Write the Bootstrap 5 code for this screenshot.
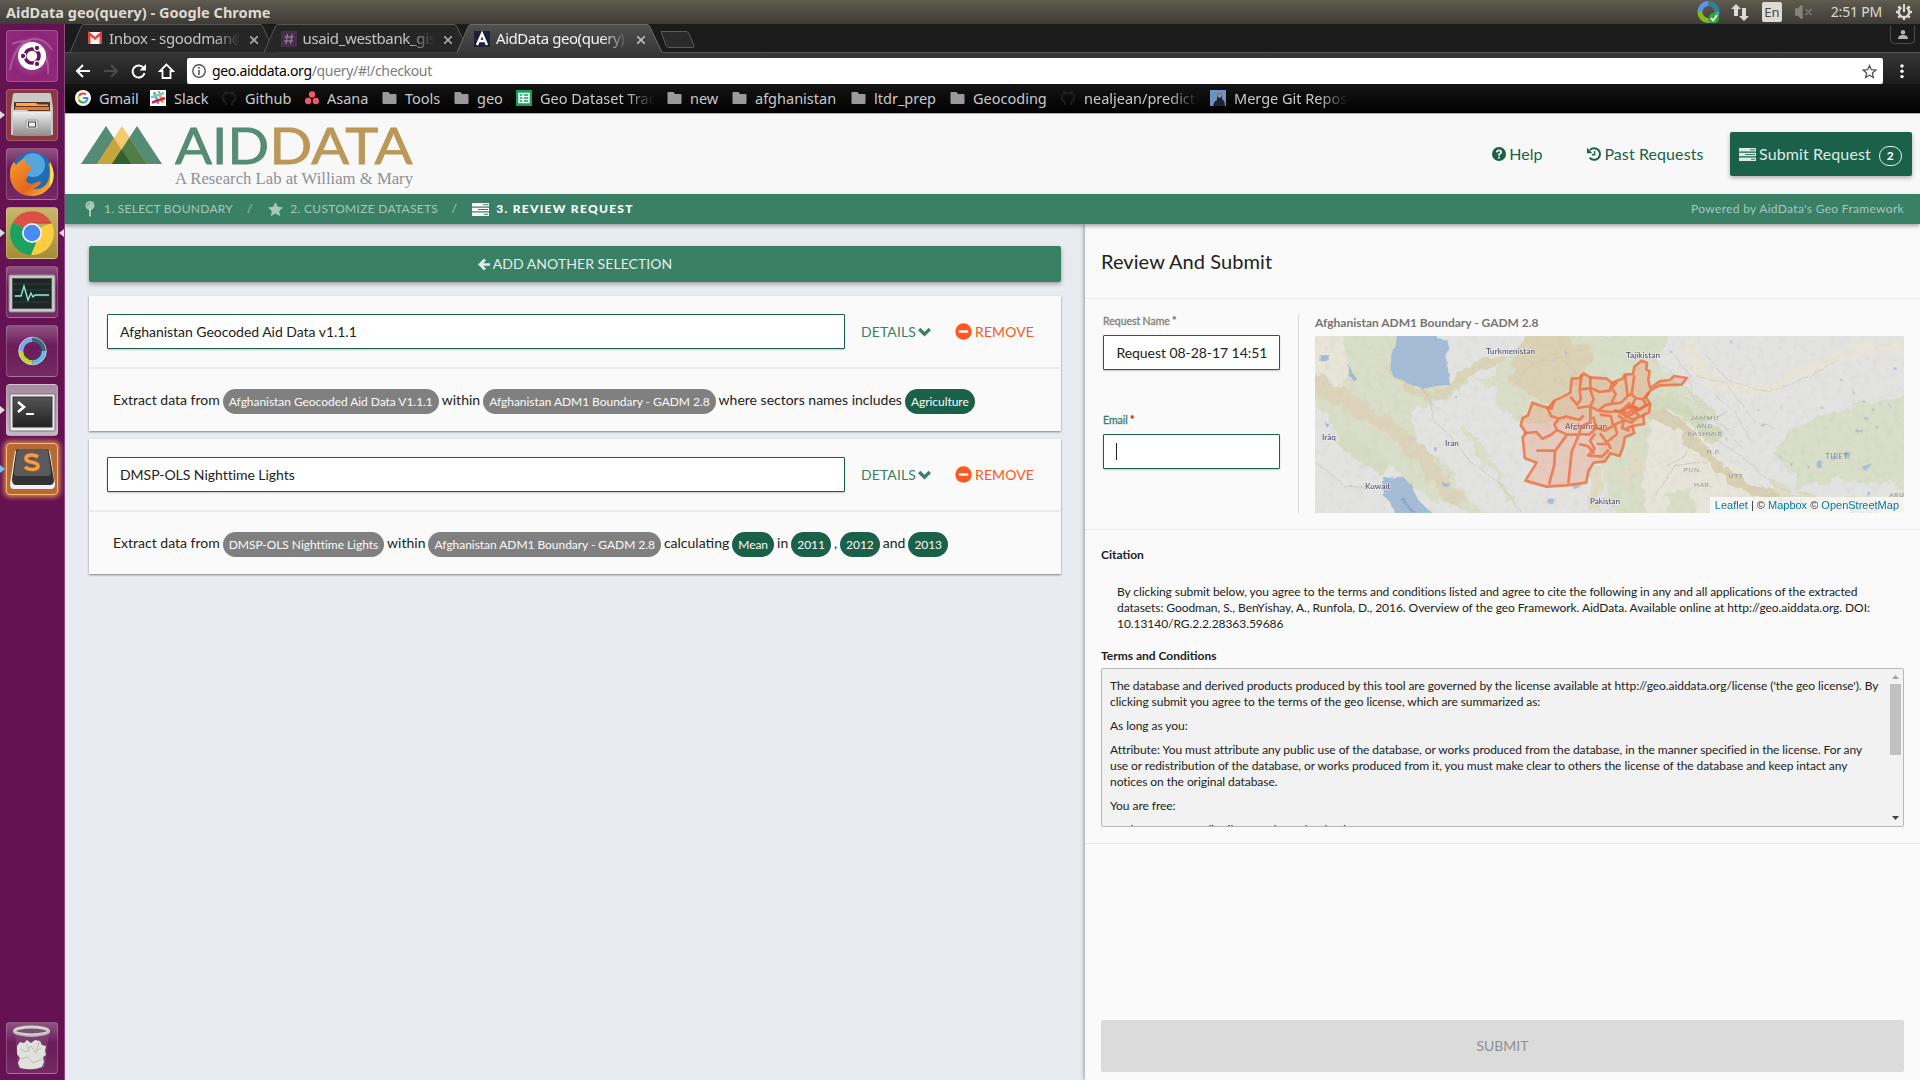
<!DOCTYPE html>
<html lang="en">
<head>
<meta charset="utf-8">
<title>AidData geo(query)</title>
<link href="https://cdn.jsdelivr.net/npm/bootstrap@5.3.0/dist/css/bootstrap.min.css" rel="stylesheet">
<style>
html,body{height:100%}
body{font-family:Lato,sans-serif;font-size:14px;color:#222;background:#e8ecf1;overflow:hidden;line-height:1.43}
svg{display:block;flex:none}
.desk{width:1920px;height:1080px}
.sysfont{font-family:"Noto Sans","Open Sans",sans-serif}
/* system panel */
.panel{height:24px;background:linear-gradient(#625d50,#5a564c 15%,#3d3c37);color:#dfdbd2;flex:none}
.panel .wtitle{padding-left:6px;font-weight:700;font-size:14.5px;letter-spacing:.02px}
.clock{margin:0 13px 0 18px;letter-spacing:-.2px;font-size:14px}
.lang{width:20px;height:20px;border-radius:2px;background:#dfdbd2;color:#4a4843;font-size:13px;line-height:20px;text-align:center}
/* launcher */
.launcher{width:65px;background:#651253;border-right:1px solid #8a4a7c;padding:6px 0 6px 6px;flex:none}
.apps{gap:7px}
.tile{width:52px;height:52px;border-radius:4px;border:1px solid rgba(255,255,255,.2);background:linear-gradient(rgba(255,255,255,.28),rgba(255,255,255,.04) 40%,rgba(255,255,255,.1));position:relative}
.tile>svg{position:absolute;left:-1px;top:-1px}
.tile.pip::before{content:"";position:absolute;left:-7px;top:21px;border:4px solid transparent;border-left:5px solid #ddd;border-right:0}
.tile.pipr::after{content:"";position:absolute;right:-7px;top:21px;border:4px solid transparent;border-right:5px solid #ddd;border-left:0}
.t-dash{background:radial-gradient(circle,#b05c9e,#8c2577 60%,#932a7e)}
.t-files{background:#8c3743}.t-chrome{background:linear-gradient(#c8b76b,#a58d35)}
.t-term{background:linear-gradient(#a68ba1,#c4b5c4)}
.t-subl{background:#b86a33;box-shadow:0 0 5px 2px #d98b4b;border-color:#ffb870}
.t-subl.pip::before{border-left-color:#6fc4e8}
/* browser chrome */
.strip{height:28px;background:#1b1b1b;padding-left:5px;flex:none}
.ctab{width:205px;height:29px;margin-right:-11.5px;position:relative;color:#c4c4c4;font-size:15px;padding:4px 17px 0 17px;flex:none}
.ctab>svg.shape{position:absolute;left:0;top:0}
.ctab>*:not(.shape){position:relative}
.ctab .ttl{width:132px;white-space:nowrap;overflow:hidden;letter-spacing:-.35px;margin-left:7px;line-height:21px;-webkit-mask-image:linear-gradient(90deg,#000 80%,transparent)}
.ctab.on{z-index:2;color:#f4f4f4}
.ctab.t3 .ttl{letter-spacing:-.45px;margin-left:6px}
.strip .userbox{width:25px;height:18px;border:1px solid #4c4c4c;border-top:0;border-radius:0 0 5px 5px;margin:2px 5px 0 0}
.tools{height:32px;background:linear-gradient(#363636,#1c1c1c);border-top:1px solid #545454;padding:5px 0 0 10px;flex:none}
.omni{width:1696px;height:26px;background:#fff;border-radius:2px;color:#7d7d7d;font-size:14px;padding:0 6px 0 5px;margin-left:12px}
.omni .addr{letter-spacing:-.33px;margin-left:6px}
.marks{height:30px;background:linear-gradient(#151515,#000);border-bottom:1px solid #b5b0b3;color:#c9c9c9;font-size:14.5px;padding:0 0 2px 10px;flex:none}
.bm{gap:8px;margin-right:12px;white-space:nowrap}
.bm span{overflow:hidden;display:block;line-height:24px}
.fade-r span{-webkit-mask-image:linear-gradient(90deg,#000 75%,transparent)}
/* page header */
.hd{height:80px;background:#f8f8f8;padding:0 8px 0 16px;flex:none}
.hlink{font-size:16px;color:#1b6049;gap:3.5px;text-decoration:none;line-height:24px}
.subreq{background:#1b6049;color:#dcebe5;height:44px;width:182px;border-radius:2px;padding-left:9px;font-size:16px;box-shadow:0 2px 4px rgba(0,0,0,.3);gap:3px;letter-spacing:.12px}
.cnt{width:23px;height:20px;border:1px solid #e8f2ee;border-radius:10px;font-size:12px;font-weight:700;line-height:18px;text-align:center;margin:3px 0 0 5px;color:#fff}
.steps{height:30px;background:#3a8067;color:rgba(255,255,255,.56);font-size:12px;letter-spacing:.28px;padding:0 16px 0 20px;box-shadow:0 2px 4px rgba(0,0,0,.35);position:relative;z-index:3;flex:none}
.steps .cur{color:#fff;font-weight:900;letter-spacing:1.28px}
.powered{letter-spacing:.32px}
/* left pane */
.lpane{width:1020px;padding:22px 24px 0 24px;background:#e8ecf1;flex:none}
.addbtn{height:36px;background:#3a8067;color:#e1eee9;border-radius:2px;box-shadow:0 2px 4px rgba(0,0,0,.35);margin-bottom:14px;gap:3px;width:972px;letter-spacing:.06px}
.sel{width:972px;height:135px;background:#fafafa;box-shadow:0 1px 2px rgba(0,0,0,.45);margin-bottom:8px}
.sel .top{height:73px;padding:0 27px 0 18px;border-bottom:2px solid #ececec}
.inp{height:35px;background:#fff;border:1px solid #1b6049;border-radius:1px;box-shadow:0 1px 2px rgba(0,0,0,.2);padding:1px 0 0 12px}
.inp.w1{width:738px;letter-spacing:-.03px}
.inp.w2{width:177px;padding-left:12.5px;margin-top:7px;letter-spacing:-.06px}
.act{color:#3a8067;gap:2px;padding-top:1px;letter-spacing:.1px}.act.rm{color:#ff5722;gap:3px}
.desc{height:62px;padding:0 0 0 24px;white-space:nowrap;line-height:25px}
.desc>span{margin-right:3px;margin-top:-1px}
.desc>.pill{background:#808080;color:#fafafa;height:25px;border-radius:12.5px;font-size:12px;line-height:26px;padding:0 6px;margin-top:3px;letter-spacing:-.045px}
.desc>.pill.g{background:#1b6049}
/* right pane */
.rpane{background:#fafafa;box-shadow:-1px 0 4px rgba(0,0,0,.35);padding:0;min-width:0}
.sec{border-bottom:1px solid #ececec}
.sec.hdr{height:75px;padding-left:16px;font-size:20px;letter-spacing:.07px}
.lab{font-size:10.5px;color:#808080;line-height:14px;-webkit-text-stroke:.3px;word-spacing:-.5px}
.formcol{width:196px;height:199px;margin:15px 0 0 18px;border-right:1px solid #d8d8d8}
.caret{width:1px;height:17px;background:#222;margin-bottom:1px}
.maptitle{font-size:12px;font-weight:700;color:#757575;line-height:16px;letter-spacing:-.02px}
.mapbox{width:589px;height:177px;overflow:hidden;position:relative;margin-top:5px}
.attr{position:absolute;right:0;bottom:0;height:16px;background:rgba(255,255,255,.7);font:11px/16px "Liberation Sans",sans-serif;color:#333;padding:0 5px;white-space:nowrap}
.attr b{font-weight:400;color:#0078a8}
.sm{font-size:12px;line-height:16px;letter-spacing:-.06px}
.sm .fw-bold{letter-spacing:0}
.terms{width:803px;height:159px;background:#f2f2f2;border:1px solid #b8b8b8;border-radius:2px;overflow:hidden}
.terms p{margin:0 0 8px}
.sbar{width:11px;margin-right:2px}
.thumbx{height:71px;background:#c1c1c1}
.subm{height:52px;background:#dbdbdb;color:#8f8f8f;border-radius:2px;margin:0 16px 8px}
</style>
</head>
<body>
<svg width="0" height="0" class="position-absolute"><defs>
<symbol id="i-fold" viewBox="0 0 14 13"><path d="M1 1h5l1.500 2H13q1 0 1 1v8q0 1-1 1H1q-1 0-1-1V1.500Q0 1 1 1z" fill="#9a9a9a"/></symbol>
<symbol id="i-git" viewBox="0 0 16 16"><path d="M5 15v-3M11 15v-3M5 12c-4-1-5-8 0-8l-1-2 3 1h2l3-1-1 2c5 0 4 7 0 8" fill="none" stroke="#222" stroke-width="1.600"/></symbol>
<symbol id="i-task" viewBox="0 0 17 13"><path d="M0 0h17v3.500H0zM0 4.700h17v3.600H0zM0 9.500h17V13H0z" fill="currentColor"/><path d="M11 1.800h5M6 6.500h10M12 11.300h4" stroke="#3a8067" stroke-width="1.100"/></symbol>
<symbol id="i-chev" viewBox="0 0 13 10"><path d="M1.200 2L6.500 7.200 11.800 2" fill="none" stroke="currentColor" stroke-width="3.200"/></symbol>
<symbol id="i-minus" viewBox="0 0 17 17"><circle cx="8.500" cy="8.500" r="8.200" fill="currentColor"/><path d="M3.800 8.500h9.400" stroke="#fff" stroke-width="2.400"/></symbol>
<linearGradient id="gm" x2="0" y2="1"><stop stop-color="#eee"/><stop offset="1" stop-color="#8d8d8d"/></linearGradient>
<linearGradient id="gd" x2="0" y2="1"><stop stop-color="#555"/><stop offset="1" stop-color="#222"/></linearGradient>
<linearGradient id="ga" x2="0" y2="1"><stop stop-color="#505050"/><stop offset="1" stop-color="#373737"/></linearGradient>
<linearGradient id="gf" x1="0" y1="0" x2="1" y2="1"><stop stop-color="#f4a12c"/><stop offset=".6" stop-color="#e8641e"/><stop offset="1" stop-color="#ffd43a"/></linearGradient>
</defs></svg>

<div class="desk d-flex flex-column">
 <div class="panel sysfont d-flex align-items-center">
  <div class="wtitle flex-grow-1">AidData geo(query) - Google Chrome</div>
  <svg width="23" height="22" viewBox="0 0 23 22" style="margin-right:11px"><g fill="none" stroke-width="5"><path d="M3 11A8.500 8.500 0 0 1 11.500 2.500" stroke="#5a93f2"/><path d="M11.500 2.500A8.500 8.500 0 0 1 20 11" stroke="#2e8390"/><path d="M20 11a8.500 8.500 0 0 1-8.500 8.500" stroke="#4aa0d0"/><path d="M11.500 19.500A8.500 8.500 0 0 1 3 11" stroke="#86b81a"/></g><circle cx="17" cy="17" r="5.200" fill="#2fa52d"/><path d="M14 17l2.200 2.500L20 14" fill="none" stroke="#fff" stroke-width="1.800"/></svg>
  <svg width="18" height="17" viewBox="0 0 18 17" style="margin-right:9px"><path d="M5 0l5 5H7v7H3V5H0zM13 17l-5-5h3V4h4v8h3z" fill="#dfdbd2"/></svg>
  <div class="lang ms-1">En</div>
  <svg width="18" height="14" viewBox="0 0 18 14" style="margin-left:13px"><path d="M0 4h3l4-4v14l-4-4H0zM10.500 4l6 6m0-6l-6 6" fill="#85827a" stroke="#85827a" stroke-width="1.300"/></svg>
  <div class="clock">2:51 PM</div>
  <svg width="18" height="18" viewBox="-9 -9 18 18" style="margin-right:7px"><g stroke="#dfdbd2" fill="none"><path d="M-2.600-4.500A5.200 5.200 0 1 0 2.600-4.500" stroke-width="2.200"/><path d="M0-8v8" stroke-width="2"/><path d="M-8 0h3M8 0H5M0 8V5M-5.700-5.700l2 2M5.700-5.700l-2 2M-5.700 5.700l2-2M5.700 5.700l-2-2" stroke-width="2.400"/></g></svg>
 </div>

 <div class="d-flex flex-grow-1" style="min-height:0">
  <div class="launcher d-flex flex-column" >
   <div class="apps d-flex flex-column flex-grow-1">
    <div class="tile t-dash"><svg width="52" height="52" viewBox="0 0 52 52"><path d="M4 40C10 4 36 2 46 20M6 14c20-10 38 8 36 30" fill="none" stroke="#c886bb" stroke-width="2" opacity=".5"/><circle cx="26" cy="26" r="14" fill="#fff"/><circle cx="26" cy="26" r="7" fill="none" stroke="#6d1459" stroke-width="3.600"/><g fill="#6d1459" stroke="#fff" stroke-width="1.300"><circle cx="17" cy="26" r="2.800"/><circle cx="31" cy="18" r="2.800"/><circle cx="31" cy="34" r="2.800"/></g></svg></div>
    <div class="tile t-files pip"><svg width="52" height="52" viewBox="0 0 52 52"><path d="M7 5q1-1 2-1h34q2 0 2 1l2 14v27H5V19z" fill="#c9c9c9"/><path d="M8 13h36v9H8z" fill="#5c3220"/><path d="M10 14h20l2 1.500h10V17H10z" fill="#f7a655"/><path d="M9 18h34v3H9z" fill="#e67f35"/><path d="M7 21h14l3 2h21v4H7z" fill="#d5d5d5"/><path d="M7 23h38v23q0 1-1 1H8q-1 0-1-1z" fill="url(#gm)"/><rect x="20" y="31" width="12" height="9" rx="1.500" fill="#ddd" stroke="#999"/><rect x="22.500" y="33" width="7" height="5" fill="#eee" stroke="#444"/></svg></div>
    <div class="tile"><svg width="52" height="52" viewBox="0 0 52 52"><circle cx="26" cy="25" r="21" fill="#1e6db4"/><circle cx="27" cy="17" r="12" fill="#63b4e6" opacity=".8"/><path d="M44 14c5 9 5 19-1 26-5 6-11 8-17 8C11 48 4 37 4 27c0-6 1-10 4-13l2 3c2-3 5-5 9-7-1 3 0 5 2 7 3 1 5 1 5 3s-2 3-4 4c-1 4 1 5-2 7 0 5 6 6 11 3 2-1 4 0 4 1-3 3-5 4-8 6 8 1 15-3 16-12 1-4 1-8-1-12z" fill="url(#gf)"/><path d="M44 14c5 9 5 19-1 26 2-9 1-18 1-26z" fill="#ffe45a"/></svg></div>
    <div class="tile t-chrome pip pipr"><svg width="52" height="52" viewBox="0 0 52 52"><path d="M26 26L7 15A22 22 0 0 1 45.500 16H26z" fill="#dd5144"/><path d="M26 26L36 20l9.500-4A22 22 0 0 1 25 48z" fill="#ffcd42"/><path d="M26 26l4 10-5 12A22 22 0 0 1 7 15z" fill="#1aa260"/><path d="M26 16h19.500" stroke="#b83b30"/><circle cx="26" cy="26" r="10" fill="#f5f5f5"/><circle cx="26" cy="26" r="8.300" fill="#4a8af4"/></svg></div>
    <div class="tile"><svg width="52" height="52" viewBox="0 0 52 52"><rect x="3" y="9" width="46" height="37" rx="1.500" fill="#c9c9c9" stroke="#888"/><rect x="6.500" y="12.500" width="39" height="30" fill="#1d2826" stroke="#555"/><path d="M7 18h38M7 24h38M7 30h38M7 36h38" stroke="#303d3a"/><path d="M9 30h6l3-10 4 14 3-7 2 4 2-2h14" fill="none" stroke="#8ff0dc" stroke-width="1.300"/></svg></div>
    <div class="tile"><svg width="52" height="52" viewBox="0 0 52 52"><g fill="none" stroke-width="4.500"><path d="M15 26A11.500 11.500 0 0 1 26.500 14.500" stroke="#7ba6f0"/><path d="M26.500 14.500A11.500 11.500 0 0 1 38 26" stroke="#2b6d7e"/><path d="M38 26A11.500 11.500 0 0 1 26.500 37.500" stroke="#5bc0de"/><path d="M26.500 37.500A11.500 11.500 0 0 1 15 26" stroke="#b3d92c"/></g><circle cx="26.500" cy="26" r="13.800" fill="none" stroke="#ddd" stroke-width=".8"/></svg></div>
    <div class="tile t-term pip"><svg width="52" height="52" viewBox="0 0 52 52"><rect x="4" y="10" width="45" height="37" rx="1" fill="#eee" stroke="#777"/><rect x="7" y="13" width="39" height="30" fill="url(#gd)" stroke="#333"/><path d="M12 18l6 5-6 5" fill="none" stroke="#fff" stroke-width="2.600"/><path d="M20 30h8" stroke="#fff" stroke-width="2"/></svg></div>
    <div class="tile t-subl pip"><svg width="52" height="52" viewBox="0 0 52 52"><path d="M9 8l-5 33q0 5 4 5h37q4 0 4-5L44 8z" fill="#f0f0f0"/><path d="M10 8L6 36q0 6 4 6h34q4 0 4-5L43 8q-1-2-3-2H13q-3 0-3 2z" fill="#333"/><path d="M11 8l-3 22q0 3 3 3h31q3 0 3-3L42 8q-1-2-3-2H13z" fill="#5a5a5a"/><path d="M32 14c-4-3-12-2.500-12 1.500 0 5.500 12 2 12 7.500 0 4.500-9 4.500-13 1" fill="none" stroke="#ff9a3c" stroke-width="3.600"/></svg></div>
   </div>
   <div class="tile"><svg width="52" height="52" viewBox="0 0 52 52"><path d="M9 10l3 35q14 6 27 0l4-35z" fill="#8a5c83" opacity=".45"/><path d="M11 24l3-4 4 1 3-3 4 3 4-3 5 1 2 4 4 1-1 5 1 4-3 2 1 5-2 5q-10 4-22 1l-2-5 2-5-3-4z" fill="#e0e0dc"/><path d="M14 27l6 3 5-6 4 6 6-4M15 37l7-2 5 6 9-4M21 22l2 8M33 20l-3 12" stroke="#bdbdb8" fill="none"/><ellipse cx="25.500" cy="9" rx="17" ry="4" fill="#7d4f74" stroke="#d5d5d2" stroke-width="3"/><path d="M8.500 9v2q17 6 34 0V9" fill="none" stroke="#bbb" stroke-width="1.500"/></svg></div>
  </div>

  <div class="d-flex flex-column flex-grow-1" style="min-width:0">
   <div class="strip sysfont d-flex">
    <div class="ctab d-flex"><svg class="shape" width="205" height="29"><path d="M0 28.500L11 3Q12 .5 14 .5H190Q192 .5 193 3L205 28.500" fill="#262626" stroke="#565656"/></svg>
     <svg width="14" height="14" viewBox="0 0 14 12" style="margin:3px 0 0 1px"><path d="M0 0h14v12H0z" fill="#f2f2f2"/><path d="M1.200 12V1.500L7 6.500l5.800-5V12" fill="none" stroke="#e0443a" stroke-width="2.400"/></svg>
     <div class="ttl">Inbox - sgoodman@aid</div><svg width="8" height="8" class="ms-auto mt-2" viewBox="0 0 8 8"><path d="M0 0l8 8m0-8L0 8" stroke="#aaa" stroke-width="1.600"/></svg></div>
    <div class="ctab d-flex"><svg class="shape" width="205" height="29"><path d="M0 28.500L11 3Q12 .5 14 .5H190Q192 .5 193 3L205 28.500" fill="#262626" stroke="#565656"/></svg>
     <svg width="16" height="16" viewBox="0 0 16 16" style="margin-top:3px"><path d="M0 0h16v16H0z" fill="#45304a"/><path d="M6.500 3l-1.500 10M11 3L9.500 13M3.500 6h9M3 10h9" stroke="#a68aa8"/></svg>
     <div class="ttl" style="margin-left:6px">usaid_westbank_gis</div><svg width="8" height="8" class="ms-auto mt-2" viewBox="0 0 8 8"><path d="M0 0l8 8m0-8L0 8" stroke="#aaa" stroke-width="1.600"/></svg></div>
    <div class="ctab d-flex on t3"><svg class="shape" width="205" height="29"><path d="M0 28.500L11 3Q12 .5 14 .5H190Q192 .5 193 3L205 28.500V29H0z" fill="url(#ga)"/><path d="M0 28.500L11 3Q12 .5 14 .5H190Q192 .5 193 3L205 28.500" fill="none" stroke="#6a6a6a"/></svg>
     <svg width="16" height="16" viewBox="0 0 16 16" style="margin-top:3px"><path d="M0 0h16v16H0z" fill="#1b2138"/><path d="M3 14L8 2.500 13 14M5 10h6" fill="none" stroke="#fff" stroke-width="2.400"/></svg>
     <div class="ttl">AidData geo(query)</div><svg width="8" height="8" class="ms-auto mt-2" viewBox="0 0 8 8"><path d="M0 0l8 8m0-8L0 8" stroke="#bbb" stroke-width="1.600"/></svg></div>
    <svg width="36" height="20" viewBox="0 0 36 20" style="margin:6px 0 0 9px"><path d="M1 1.500h25q2 0 3 2l5 12q1 2-2 2H9q-2 0-3-2z" fill="#2b2b2b" stroke="#5a5a5a"/></svg>
    <div class="userbox ms-auto d-flex justify-content-center"><svg width="10" height="9" viewBox="0 0 10 9" class="mt-1"><circle cx="5" cy="2.200" r="2.200" fill="#b5b5b5"/><path d="M0 9q0-4 5-4t5 4z" fill="#b5b5b5"/></svg></div>
   </div>
   <div class="tools sysfont d-flex align-items-center">
    <svg width="16" height="14" viewBox="0 0 16 14"><path d="M15 7H2M8 1L2 7l6 6" fill="none" stroke="#fff" stroke-width="2"/></svg>
    <svg width="16" height="14" viewBox="0 0 16 14" style="margin-left:12px"><path d="M1 7h13M8 1l6 6-6 6" fill="none" stroke="#4c4c4c" stroke-width="2"/></svg>
    <svg width="15" height="15" viewBox="0 0 15 15" style="margin-left:12px"><path d="M12.500 4A6 6 0 1 0 13.500 9" fill="none" stroke="#fff" stroke-width="2"/><path d="M15 0v6.500H8.500z" fill="#fff"/></svg>
    <svg width="17" height="16" viewBox="0 0 17 16" style="margin-left:12px"><path d="M8.500 1.500L2 8h2.500v7h8V8H15z" fill="none" stroke="#fff" stroke-width="1.800"/></svg>
    <div class="omni d-flex align-items-center"><svg width="14" height="14" viewBox="0 0 14 14"><circle cx="7" cy="7" r="6.200" fill="none" stroke="#555" stroke-width="1.400"/><path d="M7 6v5M7 3v1.700" stroke="#555" stroke-width="1.600"/></svg><div class="addr"><span class="text-black">geo.aiddata.org</span>/query/#!/checkout</div>
     <svg class="ms-auto" width="15" height="15" viewBox="0 0 15 15"><path d="M7.500 1.500l1.800 4.200 4.500.4-3.400 3 1 4.400-3.900-2.300-3.900 2.300 1-4.400-3.400-3 4.500-.4z" fill="none" stroke="#555" stroke-width="1.300"/></svg></div>
    <svg width="4" height="15" viewBox="0 0 4 15" style="margin-left:17px"><g fill="#fff"><circle cx="2" cy="2" r="1.700"/><circle cx="2" cy="7.300" r="1.700"/><circle cx="2" cy="12.600" r="1.700"/></g></svg>
   </div>
   <div class="marks sysfont d-flex align-items-center">
    <div class="bm d-flex align-items-center"><svg width="16" height="16" viewBox="0 0 16 16"><circle cx="8" cy="8" r="8" fill="#fff"/><g fill="none" stroke-width="2"><path d="M11 4.500A4.500 4.500 0 0 0 4 6" stroke="#ea4335"/><path d="M4 6a4.500 4.500 0 0 0 0 4" stroke="#fbbc05"/><path d="M4 10a4.500 4.500 0 0 0 7 1.500" stroke="#34a853"/><path d="M11 11.500A4.500 4.500 0 0 0 12.500 8H8" stroke="#4285f4"/></g></svg><span style="width:39px">Gmail</span></div>
    <div class="bm d-flex align-items-center"><svg width="16" height="16" viewBox="0 0 16 16"><path d="M0 0h16v16H0z" fill="#fff"/><g stroke-width="2.400"><path d="M4 2l4.500 12" stroke="#3eb991"/><path d="M8.500 1L13 13" stroke="#e9a820"/><path d="M1 7.500L14 3" stroke="#6ecadc"/><path d="M2 12.500L15 8" stroke="#e01765"/></g></svg><span style="width:35px">Slack</span></div>
    <div class="bm d-flex align-items-center"><svg width="16" height="16"><use href="#i-git"/></svg><span style="width:48px">Github</span></div>
    <div class="bm d-flex align-items-center"><svg width="14" height="14" viewBox="0 0 14 14"><g fill="#f0596a"><circle cx="7" cy="3.500" r="3.200"/><circle cx="3.200" cy="10" r="3.200"/><circle cx="10.800" cy="10" r="3.200"/></g></svg><span style="width:43px">Asana</span></div>
    <div class="bm d-flex align-items-center"><svg width="15" height="13"><use href="#i-fold"/></svg><span style="width:37px">Tools</span></div>
    <div class="bm d-flex align-items-center"><svg width="15" height="13"><use href="#i-fold"/></svg><span style="width:27px">geo</span></div>
    <div class="bm d-flex align-items-center fade-r"><svg width="16" height="16" viewBox="0 0 16 16"><path d="M0 0h16v16H0z" fill="#12a05c"/><path d="M3 3.500h10v9H3zM3 6.500h10M3 9.500h10M7 3.500v9" fill="none" stroke="#fff" stroke-width="1.400"/></svg><span style="width:115px">Geo Dataset Track</span></div>
    <div class="bm d-flex align-items-center"><svg width="15" height="13"><use href="#i-fold"/></svg><span style="width:30px">new</span></div>
    <div class="bm d-flex align-items-center"><svg width="15" height="13"><use href="#i-fold"/></svg><span style="width:84px">afghanistan</span></div>
    <div class="bm d-flex align-items-center"><svg width="15" height="13"><use href="#i-fold"/></svg><span style="width:64px">ltdr_prep</span></div>
    <div class="bm d-flex align-items-center"><svg width="15" height="13"><use href="#i-fold"/></svg><span style="width:75px">Geocoding</span></div>
    <div class="bm d-flex align-items-center fade-r"><svg width="16" height="16"><use href="#i-git"/></svg><span style="width:114px">nealjean/predicti</span></div>
    <div class="bm d-flex align-items-center fade-r"><svg width="16" height="16" viewBox="0 0 16 16"><path d="M0 0h16v16H0z" fill="#6f90c4"/><path d="M3 16q1-5 4-6V5q2-4 5 0v4q3 2 3 7z" fill="#1d2234"/><circle cx="9.500" cy="5.500" r="2.200" fill="#a98b85"/></svg><span style="width:114px">Merge Git Reposit</span></div>
   </div>

   <div class="hd d-flex align-items-center">
    <svg width="336" height="80" viewBox="0 0 336 80"><path d="M0 50L25 12l25 38z" fill="#568b76"/><path d="M31 50L56 12l25 38z" fill="#568b76"/><path d="M16 50L41 12l25 38z" fill="#f3ca6d"/><path d="M16 50L33 24.300 50 50z" fill="#c5a63c"/><path d="M31 50L48.500 23.500 66 50z" fill="#527c48"/><path d="M31 50l9.500-14.500L50 50z" fill="#33602e"/>
     <g font-family="Lato,sans-serif" font-size="51" stroke-width=".8"><text x="94" y="49.500" textLength="94" lengthAdjust="spacingAndGlyphs" fill="#568b76" stroke="#568b76">AID</text><text x="188.500" y="49.500" textLength="143" lengthAdjust="spacingAndGlyphs" fill="#bb9859" stroke="#bb9859">DATA</text></g>
     <text x="94" y="69.500" font-family="Liberation Serif,serif" font-size="17.500" textLength="238" lengthAdjust="spacingAndGlyphs" fill="#8a9299">A Research Lab at William &amp; Mary</text></svg>
    <a class="hlink d-flex align-items-center ms-auto"><svg width="14" height="14" viewBox="0 0 14 14"><circle cx="7" cy="7" r="7" fill="#1b6049"/><path d="M4.800 5.300Q5 3.300 7 3.300t2.200 1.900Q9.200 6.300 7 7.400V8.700" fill="none" stroke="#f8f8f8" stroke-width="1.700"/><path d="M6.100 9.700h1.800v1.700H6.100z" fill="#f8f8f8"/></svg>Help</a>
    <a class="hlink d-flex align-items-center" style="margin:0 26.500px 0 44.500px;gap:3.500px;letter-spacing:.09px"><svg width="14" height="14" viewBox="0 0 14 14"><path d="M2.600 10.600A5.800 5.800 0 1 0 3 3" fill="none" stroke="#1b6049" stroke-width="2"/><path d="M0 .8v5.400h5.400z" fill="#1b6049"/><path d="M7.600 4v3.800H5" fill="none" stroke="#1b6049" stroke-width="1.400"/></svg>Past Requests</a>
    <div class="subreq d-flex align-items-center"><svg width="17" height="13"><use href="#i-task"/></svg>Submit Request<div class="cnt">2</div></div>
   </div>
   <div class="steps d-flex align-items-center">
    <svg width="10" height="16" viewBox="0 0 10 16"><circle cx="5" cy="4.500" r="4.500" fill="currentColor"/><path d="M4 8h2v7l-1 1-1-1z" fill="currentColor"/><path d="M2.500 4.500Q2.700 2.500 4.600 2.200" fill="none" stroke="#3a8067" stroke-width=".8"/></svg><span style="margin-left:9px">1. SELECT BOUNDARY</span><span style="margin:0 15.500px 0 14px">/</span>
    <svg width="15" height="14" viewBox="0 0 15 14"><path d="M7.500 0l2.300 4.700 5.200.7-3.800 3.600 1 5.100-4.700-2.500-4.700 2.500 1-5.100L0 5.400l5.200-.7z" fill="currentColor"/></svg><span style="margin-left:7px">2. CUSTOMIZE DATASETS</span><span style="margin:0 14.500px 0 13.500px">/</span>
    <span class="cur d-flex align-items-center"><svg width="17" height="13" style="margin-right:7.500px"><use href="#i-task"/></svg>3. REVIEW REQUEST</span>
    <span class="powered ms-auto">Powered by AidData's Geo Framework</span>
   </div>

   <div class="d-flex flex-grow-1" style="min-height:0">
    <div class="lpane">
     <div class="addbtn d-flex align-items-center justify-content-center"><svg width="12" height="13" viewBox="0 0 12 13"><path d="M12 6.500H2.500M7 1.500l-5 5 5 5" fill="none" stroke="currentColor" stroke-width="2.700"/></svg>ADD ANOTHER SELECTION</div>
     <div class="sel">
      <div class="top d-flex align-items-center"><div class="inp w1 d-flex align-items-center">Afghanistan Geocoded Aid Data v1.1.1</div>
       <div class="act d-flex align-items-center ms-3">DETAILS<svg width="13" height="10"><use href="#i-chev"/></svg></div><div class="act rm d-flex align-items-center ms-auto"><svg width="17" height="17"><use href="#i-minus"/></svg>REMOVE</div></div>
      <div class="desc d-flex align-items-center"><span>Extract data from</span><span class="pill">Afghanistan Geocoded Aid Data V1.1.1</span><span>within</span><span class="pill">Afghanistan ADM1 Boundary - GADM 2.8</span><span>where sectors names includes</span><span class="pill g">Agriculture</span></div>
     </div>
     <div class="sel">
      <div class="top d-flex align-items-center"><div class="inp w1 d-flex align-items-center">DMSP-OLS Nighttime Lights</div>
       <div class="act d-flex align-items-center ms-3">DETAILS<svg width="13" height="10"><use href="#i-chev"/></svg></div><div class="act rm d-flex align-items-center ms-auto"><svg width="17" height="17"><use href="#i-minus"/></svg>REMOVE</div></div>
      <div class="desc d-flex align-items-center"><span>Extract data from</span><span class="pill">DMSP-OLS Nighttime Lights</span><span>within</span><span class="pill">Afghanistan ADM1 Boundary - GADM 2.8</span><span>calculating</span><span class="pill g">Mean</span><span>in</span><span class="pill g">2011</span><span>,</span><span class="pill g">2012</span><span>and</span><span class="pill g">2013</span></div>
     </div>
    </div>

    <div class="rpane flex-grow-1 d-flex flex-column">
     <div class="sec hdr d-flex align-items-center">Review And Submit</div>
     <div class="sec d-flex" style="height:231px">
      <div class="formcol">
       <div class="lab">Request Name *</div>
       <div class="inp w2 d-flex align-items-center">Request 08-28-17 14:51</div>
       <div class="lab" style="margin-top:43px;color:#3a8067">Email <span style="color:#dd2c00">*</span></div>
       <div class="inp w2 d-flex align-items-center" style="padding-left:12px"><div class="caret"></div></div>
      </div>
      <div style="margin-left:16px;padding-top:16px">
       <div class="maptitle">Afghanistan ADM1 Boundary - GADM 2.8</div>
       <div class="mapbox">
        <svg width="589" height="177" viewBox="0 0 589 177">
         <defs><filter id="rough" x="-5%" y="-5%" width="110%" height="110%"><feTurbulence type="fractalNoise" baseFrequency=".07" numOctaves="4" seed="7"/><feDisplacementMap in="SourceGraphic" scale="15" xChannelSelector="R" yChannelSelector="G"/></filter>
         <filter id="jag" x="-5%" y="-5%" width="110%" height="110%"><feTurbulence type="fractalNoise" baseFrequency=".12" numOctaves="3" seed="3"/><feDisplacementMap in="SourceGraphic" scale="4" xChannelSelector="R" yChannelSelector="G"/></filter>
         <filter id="relief" x="0" y="0" width="100%" height="100%"><feTurbulence type="fractalNoise" baseFrequency=".14" numOctaves="4" seed="12"/><feColorMatrix values="0 0 0 0 .5  0 0 0 0 .47  0 0 0 0 .36  2.600 0 0 0 -1.250"/></filter></defs>
         <rect width="589" height="177" fill="#e3e3e2"/>
         <g filter="url(#rough)">
          <g transform="translate(-235 -106) scale(.3333)">
           <path d="M690 300h250l10 130 80 50 120-30 130 40 60-60 50-120h80v230l-120-40-90-60-100 20-90 60-80 20 30 110 80 60 60 90 70 50-30 20-80-50-100-30-110-110-110-30-80-110-50-90z" fill="#d9dec9"/>
           <path d="M690 300h100l20 130-50 60-70-20z" fill="#e7e4d8"/>
           <path d="M690 440l130 90 110 60 90 80 60 90 60 60" fill="none" stroke="#dcd3bb" stroke-width="46"/>
           <path d="M930 400l60 80 80 20 120-90 80-30 80 70" fill="none" stroke="#d9d3b8" stroke-width="24"/>
           <path d="M1150 590l70 90 70 130" fill="none" stroke="#d9dec9" stroke-width="18"/>
           <path d="M780 620l80 60 60 40" fill="none" stroke="#d6dcc3" stroke-width="50"/>
          </g>
          <g transform="translate(185 -36) scale(.3333)">
           <path d="M-10 190l100-60 120-50 110 30 80-30 100 20-30 80 60 60 60 60 60 40-80 100-90 170-60 60-80-10-60-300-200 20-90-60z" fill="#d9dec9"/>
           <path d="M20 240l60-140 80-10 120 60-30 110-130 50z" fill="#dbd1b5"/>
           <path d="M460 330l100 0 90 110 100 90 80 60 80 60H440l-10-140z" fill="#e7e4da"/>
           <path d="M450 330l90 50 80 90 100 80 120 50 100 10" fill="none" stroke="#d8d0b4" stroke-width="36"/>
           <path d="M430 320l80-20 80 60 60 60" fill="none" stroke="#d2dabd" stroke-width="46"/>
           <path d="M560 130l60 100 100 40 100-10 140-70 120-40 140-10" fill="none" stroke="#e7e5d9" stroke-width="36"/>
           <path d="M820 460l60-80 130-50 230-50v280l-220-20-120 20z" fill="#d8dec8"/>
           <path d="M800 530l100 50 120 20 220-20v80H860z" fill="#dedcc6"/>
           <path d="M510 580l60-20 20 40-20 60h-80z" fill="#d9dec9"/>
           <path d="M290 500l-10 140M400 440l20 60-60 40" fill="none" stroke="#dedac4" stroke-width="34"/>
          </g>
         </g>
         <rect width="589" height="177" filter="url(#relief)" opacity=".16"/>
         <g filter="url(#jag)" fill="none" stroke="#c9c6b8" stroke-width=".8"><path d="M76 18l18 14 20 30 6 24 14 12 20 26 30 22 22 30M80 36l26 14 14 22M0 126l30 24 22 2M200 42l20-16 26-4 20 20M244 40l12 20M352 130l18-10 12-32 30-12M340 160l20-30 24-4"/><path d="M350 70l26 8 20 22 30 20 36 32 40 8M366 60l30 14 32 40M392 20l20 24 40 12 30-10 40-20M380 40l30 6 30 40 20 6M360 20l14 18 4 24 18 10M350 30l20 20 20 30 30 16M400 60l20 16 16 30" stroke="#cfcdbf"/></g>
         <g fill="#a4bbd5" filter="url(#jag)">
          <g transform="translate(-235 -106) scale(.3333)"><path d="M952 300h112l8 28 30 4 6 26-10 12 12 94-40 4-40 8-32-10-30-16-22-6-14-22 2-48 12-20z"/><path d="M806 400l10 26 16 22-10 6-14-18zM720 376l32 0-10 16-24 4zM734 570l12 22-8 4zM910 745l60-5 25 30 20 40 50 50H946l-14-42-20-20zM1090 755l20 10-6 6-16-6zM1066 652l8 0-2 10-6 0zM1122 500l16 0-6 6z"/></g>
          <g transform="translate(185 -36) scale(.3333)"><path d="M215 555l30 0-20 14zM145 597l24-2-10 14-14 0zM190 148l14 12-6 2zM1018 240l8-6 2 8zM1054 272l12 6-8 4zM1180 200l12 6-10 4zM1070 392l20-2-4 8-16 2zM1085 500l30-10-20 22zM1035 455l20 4-10 16-14-10zM950 490l14-10 2 20-14 4zM918 492l14 8-8 4zM870 488l10 4-6 8zM836 470l8 2-4 6zM770 330l8-2 0 6zM725 320l8 0-2 8zM784 370l12 2-6 6zM960 322l10-2-2 8zM1090 350l16 6-10 4zM1085 298l14 4-6 6zM1100 576l12 0-6 14zM506 156l10-4 2 10zM688 126l8-2 0 8z"/><path d="M990 470l14 0-4 10zM1115 325l10 4-6 6zM1130 380l8 4-6 6zM1165 310l8 6-6 4zM840 320l6 0-2 8zM675 416l6-2 0 8z"/></g></g>
         <g font-family="Lato,sans-serif" font-size="8.200" fill="#45456b" stroke="#f0f0ee" stroke-width="1.500" paint-order="stroke" stroke-opacity=".6">
          <text x="171" y="18" textLength="49">Turkmenistan</text><text x="7" y="104">Irāq</text><text x="130" y="110">Iran</text><text x="50" y="153">Kuwait</text><text x="311" y="22" textLength="34">Tajikistan</text><text x="275" y="168">Pakistan</text><text x="250" y="93" textLength="42">Afghanistan</text></g>
         <g font-family="Lato,sans-serif" font-size="6.500" fill="#93939f" letter-spacing=".8" text-anchor="middle"><text x="390" y="84">JAMMU</text><text x="390" y="92">AND</text><text x="390" y="100">KASHMIR</text><text x="399" y="118">H.P.</text><text x="378" y="136">PUN.</text><text x="388" y="151">HAR.</text><text x="421" y="142">UTT</text><text x="522" y="123" fill="#7c8a9d" font-size="7">TIBET</text><text x="582" y="161">ARU</text><text x="475" y="167" font-size="8">Nepal</text><text x="549" y="177" font-size="7.500">Bhutan</text><text x="97" y="170" font-size="5.500" transform="rotate(48 92 168)" letter-spacing=".2" fill="#7088a8">Persian G</text></g>
         <g transform="translate(185 -36) scale(.3333)" stroke="#ee6a3c" stroke-opacity=".78" stroke-width="8" stroke-linejoin="round" fill="none">
          <path d="M97 308l34 12 24 6 8-24 26-12 22-12 4-42 24-2 12-14 20 12 50 4 14 12 32-12 8-12 24-2 4-22 22-18 16 6-2 20 10 6-4 26 6 24 28-20 30-4 14-12 38 6-16 20-66 2-28 16-14 18 14 22-4 26-18 8 4 26-36 6 6 22-28 12-6 30-10 26-28-8-16 24-34 4-16 26-6 34-60 8-60 4-63-18 34-54-36-14-6-62 10-14-16-22 6-22 16-8z" fill="#f4713f" fill-opacity=".22"/>
          <path d="M163 302l-20 24 10 22 24 8 22-6 40 10 12-14M177 356l-14 18 8 16-20 16-24 10-18-20-38 4M211 290l20 24 12-16-4-26 6-50M231 324l40-6 10-20-10-28 0-40M243 268l30-4 26 12 30-4 8-24M271 320l24 12 20-16 18-4 14-30-12-18 16-18M333 312l30-4 20-20-8-64M383 288l12-6 8-56M395 282l12 12-10 22-28 16-40 4-34-4M407 294l22 4 20-20M429 298l10 16-26 18-16-16M171 390l30 14 36 0 6-24 28-14 0-46M237 402l30 2 22-20-10-34M289 384l26 8 24-14-6-30-34-4M201 404l-36 50-2 40-16 60M109 452l54 0M237 402l-22 54-10 94M237 432l26 6 20 22M286 400l-16 22 14 24-20 20 42 4 20-20"/>
          <path d="M300 400l20 26 32-24M352 402l-8-28 30-14-20-14M374 360l20 8 24-20-18-18M380 384l20-6M342 330l30 14 24-12-8-18M372 344l24 14 38-12M383 320l30 12M396 316l24 12 30-18M360 330l20 24M290 432l36 0 6 16M388 310l14 30-22 10-12-22zM372 362l-6 22 22 8"/>
         </g>
        </svg>
        <div class="attr"><b>Leaflet</b> | © <b>Mapbox</b> © <b>OpenStreetMap</b></div>
       </div>
      </div>
     </div>
     <div class="sec sm" style="height:314px;padding:17px 16px 0 16px">
      <div class="fw-bold">Citation</div>
      <div class="text-nowrap" style="margin:21px 0 0 16px;height:48px"><span style="letter-spacing:-.08px">By clicking submit below, you agree to the terms and conditions listed and agree to cite the following in any and all applications of the extracted</span><br>datasets: Goodman, S., BenYishay, A., Runfola, D., 2016. Overview of the geo Framework. AidData. Available online at http://geo.aiddata.org. DOI:<br>10.13140/RG.2.2.28363.59686</div>
      <div class="fw-bold" style="margin:16px 0 4px">Terms and Conditions</div>
      <div class="terms d-flex justify-content-between">
       <div class="text-nowrap" style="padding:9px 0 0 8px">
        <p>The database and derived products produced by this tool are governed by the license available at http://geo.aiddata.org/license ('the geo license'). By<br>clicking submit you agree to the terms of the geo license, which are summarized as:</p>
        <p>As long as you:</p>
        <p>Attribute: You must attribute any public use of the database, or works produced from the database, in the manner specified in the license. For any<br>use or redistribution of the database, or works produced from it, you must make clear to others the license of the database and keep intact any<br>notices on the original database.</p>
        <p>You are free:</p>
        <p>To share: To copy, distribute and use the database.</p>
       </div>
       <div class="sbar d-flex flex-column"><svg width="11" height="15"><path d="M2 10h7L5.500 6z" fill="#a3a3a3"/></svg><div class="thumbx"></div><svg class="mt-auto" width="11" height="15"><path d="M2 5h7L5.500 9z" fill="#444"/></svg></div>
      </div>
     </div>
     <div class="subm mt-auto d-flex align-items-center justify-content-center">SUBMIT</div>
    </div>
   </div>
  </div>
 </div>
</div>
<script src="https://cdn.jsdelivr.net/npm/bootstrap@5.3.0/dist/js/bootstrap.bundle.min.js"></script>
</body>
</html>
